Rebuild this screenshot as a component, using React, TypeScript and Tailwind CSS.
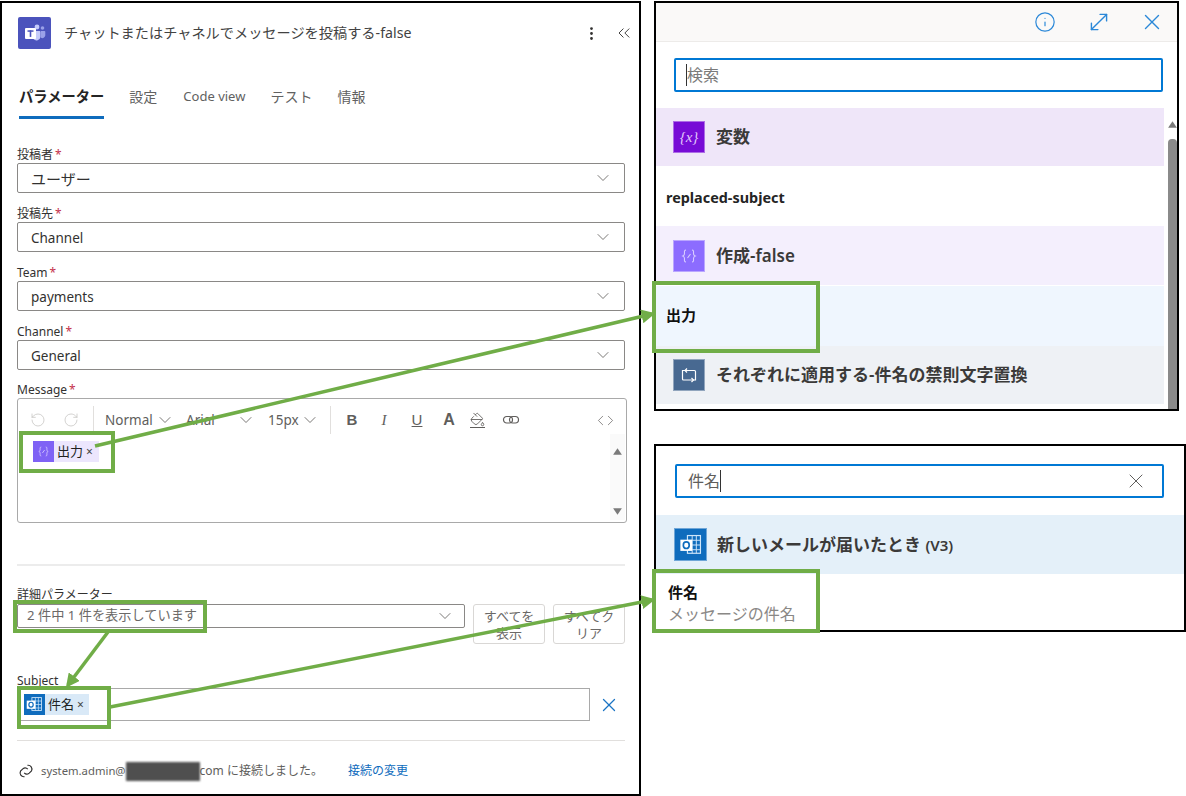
import * as React from 'react';
import { ChevronDown, ChevronsLeft, Code, Info, MoreVertical, MoveDiagonal, PaintBucket, RotateCcw, RotateCw, X } from 'lucide-react';

const Req = () => <span className="text-[#c4314b] ml-[2px]">*</span>;

const Chevron = () => <ChevronDown size={20} strokeWidth={1} className="text-[#605e5c]" />;

const TeamsLogo = () => (
  <div className="w-[33px] h-[32px] rounded-[2px] bg-[#4b53bc] flex items-center justify-center">
    <svg width="22" height="20" viewBox="0 0 22 20">
      <circle cx="13" cy="4" r="2.4" fill="#c5cbfa" />
      <circle cx="18.5" cy="5" r="1.8" fill="#9aa1e8" />
      <path d="M10 8h5.5a1 1 0 0 1 1 1v5a4 4 0 0 1-7 2z" fill="#c5cbfa" />
      <path d="M17 8h3.5a.8.8 0 0 1 .8.8v3.8a3 3 0 0 1-4.3 2.2z" fill="#9aa1e8" />
      <rect x="1" y="5" width="11" height="11" rx="1" fill="#fff" />
      <rect x="3.5" y="7.3" width="6" height="1.5" fill="#4b53bc" />
      <rect x="5.7" y="7.3" width="1.6" height="6.6" fill="#4b53bc" />
    </svg>
  </div>
);

const OutlookGlyph = ({ size }: { size: number }) => (
  <svg width={size} height={size} viewBox="0 0 22 22">
    <rect x="8" y="3" width="11" height="15" fill="none" stroke="#cfe6fa" strokeWidth="1" />
    <path d="M8 7h11M8 11h11M8 15h11M12 3v15M15.500 3v15" stroke="#cfe6fa" strokeWidth="0.8" />
    <rect x="2" y="6.500" width="10" height="9.500" fill="#fff" />
    <ellipse cx="7" cy="11.200" rx="2.500" ry="2.800" fill="none" stroke="#0f6cbd" strokeWidth="1.400" />
  </svg>
);

const ComposeGlyph = ({ size }: { size: number }) => (
  <svg width={size} height={size} viewBox="0 0 20 20" fill="none" stroke="#d8ccff" strokeWidth="1.100">
    <path d="M7 4c-2 0-1.500 2-1.500 3.500S5 9.500 3.800 10c1.200.5 1.700 1 1.700 2.500S5 16 7 16" />
    <path d="M13 4c2 0 1.500 2 1.500 3.500s.5 2 1.700 2.500c-1.200.5-1.700 1-1.700 2.500S15 16 13 16" />
    <path d="M8.500 12l3-4" />
  </svg>
);

const LoopGlyph = () => (
  <svg width="20" height="20" viewBox="0 0 20 20" fill="none" stroke="#fff" strokeWidth="1.200">
    <path d="M6 5.500H3.500v8.500a1 1 0 0 0 1 1H14" />
    <path d="M14 15h2.500V6.500a1 1 0 0 0-1-1H6" />
    <path d="M8 3.500l-2 2 2 2" />
    <path d="M12.500 13l2 2-2 2" />
  </svg>
);

const LinkGlyph = ({ size = 18, color = '#605e5c' }: { size?: number; color?: string }) => (
  <svg width={size} height={size} viewBox="0 0 18 18" fill="none" stroke={color} strokeWidth="1.200">
    <rect x="1.500" y="5.500" width="9" height="6.500" rx="3.200" />
    <rect x="7.500" y="5.500" width="9" height="6.500" rx="3.200" />
  </svg>
);

const ConnectGlyph = () => (
  <svg width="16" height="16" viewBox="0 0 16 16" fill="none" stroke="#323130" strokeWidth="1.200">
    <path d="M9.500 2.300a3.800 3.800 0 0 1 4 5.500l-2.300 2.300a3.600 3.600 0 0 1-5-.2" />
    <path d="M6.500 13.700a3.800 3.800 0 0 1-4-5.500l2.300-2.300a3.600 3.600 0 0 1 5 .2" />
  </svg>
);

const Field = ({ label, value }: { label: string; value: React.ReactNode }) => (
  <div className="mb-[9px]">
    <div className="h-[20px] text-[12px] leading-[23px] text-[#323130]">
      {label}
      <Req />
    </div>
    <div className="h-[30px] flex items-center justify-between pl-[13px] pr-[11px] border border-[#8a8886] rounded-[2px] text-[13.5px] text-[#323130]">
      <span className="pt-[2px]">{value}</span>
      <Chevron />
    </div>
  </div>
);

const ToolSep = () => <div className="w-px h-[28px] bg-[#e1dfdd]" />;

const Toolbar = () => (
  <div className="flex items-center h-[28px] mt-[7px] pl-[12px] pr-[12px] text-[#605e5c]">
    <RotateCcw size={16} strokeWidth={1.2} className="text-[#c8c6c4]" />
    <RotateCw size={16} strokeWidth={1.2} className="text-[#c8c6c4] ml-[17px]" />
    <div className="ml-[14px]"><ToolSep /></div>
    <span className="ml-[11px] text-[13.5px] w-[50px]">Normal</span>
    <Chevron />
    <span className="ml-[11px] text-[13.5px] w-[40px]">Arial</span>
    <span className="ml-[10px]"><Chevron /></span>
    <span className="ml-[12px] text-[13.5px] w-[32px]">15px</span>
    <Chevron />
    <div className="ml-[10px]"><ToolSep /></div>
    <span className="ml-[15px] w-[12px] text-center font-bold text-[15px] font-['Liberation_Sans',sans-serif]">B</span>
    <span className="ml-[20px] w-[12px] text-center italic text-[15px] font-['Liberation_Serif',serif]">I</span>
    <span className="ml-[21px] w-[12px] text-center underline text-[15px] font-['Liberation_Sans',sans-serif]">U</span>
    <span className="ml-[20px] w-[12px] text-center font-bold text-[16px] font-['Liberation_Sans',sans-serif]">A</span>
    <span className="ml-[15px] border-b border-[#605e5c]"><PaintBucket size={15} strokeWidth={1.4} /></span>
    <span className="ml-[17px]"><LinkGlyph /></span>
    <Code size={17} strokeWidth={1} className="ml-auto" />
  </div>
);

const ScrollArrow = ({ dir }: { dir: 'up' | 'down' }) => (
  <svg width="11" height="9" viewBox="0 0 10 8">
    <path d={dir === 'up' ? 'M5 1l4 6H1z' : 'M5 7L1 1h8z'} fill="#7a7a7a" />
  </svg>
);

const MessageEditor = () => (
  <div className="h-[125px] -mr-[2px] border border-[#a9a9a9] rounded-[3px] flex flex-col">
    <Toolbar />
    <div className="flex flex-1 min-h-0">
      <div className="flex-1 pl-[15px] pt-[7px]">
        <span className="inline-flex items-center h-[21px] bg-[#ece6fd] pr-[6px] text-[13px] text-[#201f1e]">
          <span className="w-[21px] h-[21px] bg-[#7f62f5] flex items-center justify-center mr-[3px]"><ComposeGlyph size={15} /></span>
          出力
          <span className="ml-[3px] text-[12px] text-[#444]">×</span>
        </span>
      </div>
      <div className="w-[15px] mr-[1px] mb-[2px] bg-[#fafafa] flex flex-col items-center justify-between pt-[13px] pb-[4px]">
        <ScrollArrow dir="up" />
        <ScrollArrow dir="down" />
      </div>
    </div>
  </div>
);

const GhostButton = ({ a, b }: { a: string; b: string }) => (
  <div className="w-[72px] h-[40px] border border-[#d9d7d5] rounded-[3px] text-[13px] leading-[17px] text-[#6b6967] text-center pt-[3px]">
    {a}
    <br />
    {b}
  </div>
);

const LeftPanel = () => (
  <div className="w-[641px] h-[795px] mt-[1px] border-2 border-black pl-[15px] pr-[14px] flex flex-col text-[#323130]">
    <div className="flex items-center mt-[14px] h-[32px] pl-[1px]">
      <TeamsLogo />
      <span className="ml-[13px] text-[14.200px] text-[#424242]">チャットまたはチャネルでメッセージを投稿する-false</span>
      <MoreVertical size={17} strokeWidth={2} className="ml-auto text-[#323130]" />
      <ChevronsLeft size={20} strokeWidth={1.100} className="ml-[14px] mr-[-9px] text-[#323130]" />
    </div>
    <div className="flex gap-[25px] mt-[28px] pl-[2px] h-[42px] text-[14px] text-[#616161]">
      <div className="border-b-[3px] border-[#0f6cbd] font-bold text-[14.300px] text-[#242424] pt-[9px]">パラメーター</div>
      <div className="pt-[9px]">設定</div>
      <div className="pt-[10px] ml-[1px] text-[13px]">Code view</div>
      <div className="pt-[9px]">テスト</div>
      <div className="pt-[9px]">情報</div>
    </div>
    <div className="mt-[24px]">
      <Field label="投稿者" value={<span className="text-[15px]">ユーザー</span>} />
      <Field label="投稿先" value="Channel" />
      <Field label="Team" value="payments" />
      <Field label="Channel" value="General" />
    </div>
    <div className="h-[19px] text-[12px] leading-[22px]">Message<Req /></div>
    <MessageEditor />
    <div className="h-[2px] bg-[#ececec] mt-[41px]" />
    <div className="h-[20px] mt-[18px] text-[12px] leading-[22px]">詳細パラメーター</div>
    <div className="flex items-start gap-[8px]">
      <div className="w-[448px] h-[24px] border border-[#8a8886] rounded-[2px] flex items-center justify-between pl-[9px] pr-[9px] text-[13.200px] text-[#6b6967]">
        <span>2 件中 1 件を表示しています</span>
        <Chevron />
      </div>
      <GhostButton a="すべてを" b="表示" />
      <GhostButton a="すべてク" b="リア" />
    </div>
    <div className="h-[18px] mt-[26px] text-[12px] leading-[21px]">Subject</div>
    <div className="flex items-center">
      <div className="w-[573px] h-[33px] border border-[#a9a9a9] flex items-center pl-[6px]">
        <span className="inline-flex items-center h-[21px] bg-[#d9e9f7] pr-[5px] text-[13px] text-[#201f1e]">
          <span className="w-[21px] h-[21px] bg-[#0f6cbd] flex items-center justify-center mr-[3px]"><OutlookGlyph size={19} /></span>
          件名
          <span className="ml-[3px] text-[12px] text-[#444]">×</span>
        </span>
      </div>
      <X size={22} strokeWidth={1.4} className="ml-[8px] text-[#1a74c4]" />
    </div>
    <div className="h-px bg-[#e1dfdd] mt-[19px]" />
    <div className="flex items-center mt-[20px] h-[20px] pl-[1px] text-[12px] text-[#605e5c]">
      <ConnectGlyph />
      <span className="ml-[7px] text-[11.300px]">system.admin@</span>
      <span className="w-[74px] h-[19px] bg-[#4f4f4f] blur-[1px]" />
      <span>com に接続しました。</span>
      <span className="ml-[25px] text-[#0f6cbd]">接続の変更</span>
    </div>
  </div>
);

const GroupRow = ({ bg, icon, iconBg, h, label }: { bg: string; icon: React.ReactNode; iconBg: string; h: string; label: React.ReactNode }) => (
  <div className={`${h} ${bg} flex items-center pl-[17px]`}>
    <div className={`w-[32px] h-[32px] ${iconBg} flex items-center justify-center border border-white/40`}>{icon}</div>
    <span className="ml-[11px] text-[17px] font-semibold text-[#3b3a39]">{label}</span>
  </div>
);

const SearchPanel = () => (
  <div className="w-[525px] h-[410px] mt-[1px] border-2 border-black flex flex-col overflow-hidden">
    <div className="h-[39px] shrink-0 bg-[#faf9f8] border-b border-[#edebe9] flex items-center justify-end text-[#2b88d8]">
      <Info size={22} strokeWidth={1.300} />
      <MoveDiagonal size={26} strokeWidth={1.300} className="ml-[30px]" />
      <X size={26} strokeWidth={1.300} className="ml-[27px] mr-[12px]" />
    </div>
    <div className="ml-[18px] mt-[16px] w-[489px] h-[34px] shrink-0 border-2 border-[#0078d4] rounded-[2px] flex items-center pl-[10px] text-[16px] text-[#7a7a7a]">
      <span className="w-px h-[22px] bg-[#333]" />
      検索
    </div>
    <div className="flex mt-[16px] flex-1 min-h-0">
      <div className="w-[508px] shrink-0 flex flex-col">
        <GroupRow
          h="h-[58px]"
          bg="bg-[#efe6f9]"
          iconBg="bg-[#770bd6]"
          icon={<span className="text-[#e3c9fb] text-[15px] italic font-['Liberation_Serif',serif]">{'{x}'}</span>}
          label="変数"
        />
        <div className="h-[60px] flex items-center pl-[10px] pt-[4px] text-[14.400px] font-bold text-[#242424]">replaced-subject</div>
        <GroupRow h="h-[59px]" bg="bg-[#f4effd]" iconBg="bg-[#8c6cff]" icon={<ComposeGlyph size={20} />} label="作成-false" />
        <div className="h-[60px] mt-px bg-[#eff6fe] flex items-center pl-[10px] pb-[2px] text-[15px] font-bold text-[#111]">出力</div>
        <GroupRow h="h-[58px]" bg="bg-[#eef1f5]" iconBg="bg-[#486991]" icon={<LoopGlyph />} label="それぞれに適用する-件名の禁則文字置換" />
      </div>
      <div className="w-[9px] ml-[4px] flex flex-col items-center pt-[12px]">
        <ScrollArrow dir="up" />
        <div className="w-[9px] flex-1 mt-[10px] bg-[#8a8a8a] rounded-t-[4px]" />
      </div>
    </div>
  </div>
);

const SubjectPanel = () => (
  <div className="w-[532px] h-[188px] mt-[33px] border-2 border-black flex flex-col">
    <div className="ml-[19px] mt-[18px] w-[489px] h-[34px] shrink-0 border-2 border-[#0078d4] rounded-[2px] flex items-center pl-[11px] pr-[14px] text-[16px] text-[#605e5c]">
      件名
      <span className="w-px h-[22px] bg-[#333]" />
      <X size={24} strokeWidth={1} className="ml-auto" />
    </div>
    <div className="h-[59px] mt-[17px] shrink-0 bg-[#e4f0f9] flex items-center pl-[18px]">
      <div className="w-[33px] h-[33px] bg-[#0f6cbd] flex items-center justify-center border border-white/40"><OutlookGlyph size={26} /></div>
      <span className="ml-[10px] text-[17px] font-semibold text-[#3b3a39]">新しいメールが届いたとき <span className="text-[15px]">(V3)</span></span>
    </div>
    <div className="pl-[12px] pt-[8px]">
      <div className="text-[15px] leading-[20px] font-bold text-[#111]">件名</div>
      <div className="text-[16px] leading-[24px] text-[#8a8886]">メッセージの件名</div>
    </div>
  </div>
);

// 注釈の枠と矢印
const Annotations = () => {
  const boxes = [
    [21, 433, 92, 38],
    [654, 283, 164, 68],
    [654, 571, 164, 60],
    [15, 602, 190, 29],
    [19, 688, 90, 39],
  ];
  return (
    <svg className="absolute inset-0 pointer-events-none" width="1186" height="796" viewBox="0 0 1186 796">
      <defs>
        <marker id="tip" markerWidth="4" markerHeight="4" refX="3" refY="2" orient="auto">
          <path d="M0 0L4 2L0 4z" fill="#70ad47" />
        </marker>
      </defs>
      {boxes.map(([x, y, w, h], i) => (
        <rect key={i} x={x} y={y} width={w} height={h} fill="none" stroke="#70ad47" strokeWidth="4" />
      ))}
      <g stroke="#70ad47" fill="none" strokeWidth="3.500">
        <line x1="95" y1="446" x2="652" y2="314" markerEnd="url(#tip)" />
        <line x1="110" y1="707" x2="652" y2="600" markerEnd="url(#tip)" />
        <line x1="108" y1="632" x2="68" y2="685" markerEnd="url(#tip)" />
      </g>
    </svg>
  );
};

const App: React.FC = () => (
  <div className="relative w-[1186px] h-[796px] overflow-hidden bg-white flex font-['Noto_Sans','Noto_Sans_CJK_JP',sans-serif]">
    <LeftPanel />
    <div className="ml-[13px] flex flex-col">
      <SearchPanel />
      <SubjectPanel />
    </div>
    <Annotations />
  </div>
);

export default App;
